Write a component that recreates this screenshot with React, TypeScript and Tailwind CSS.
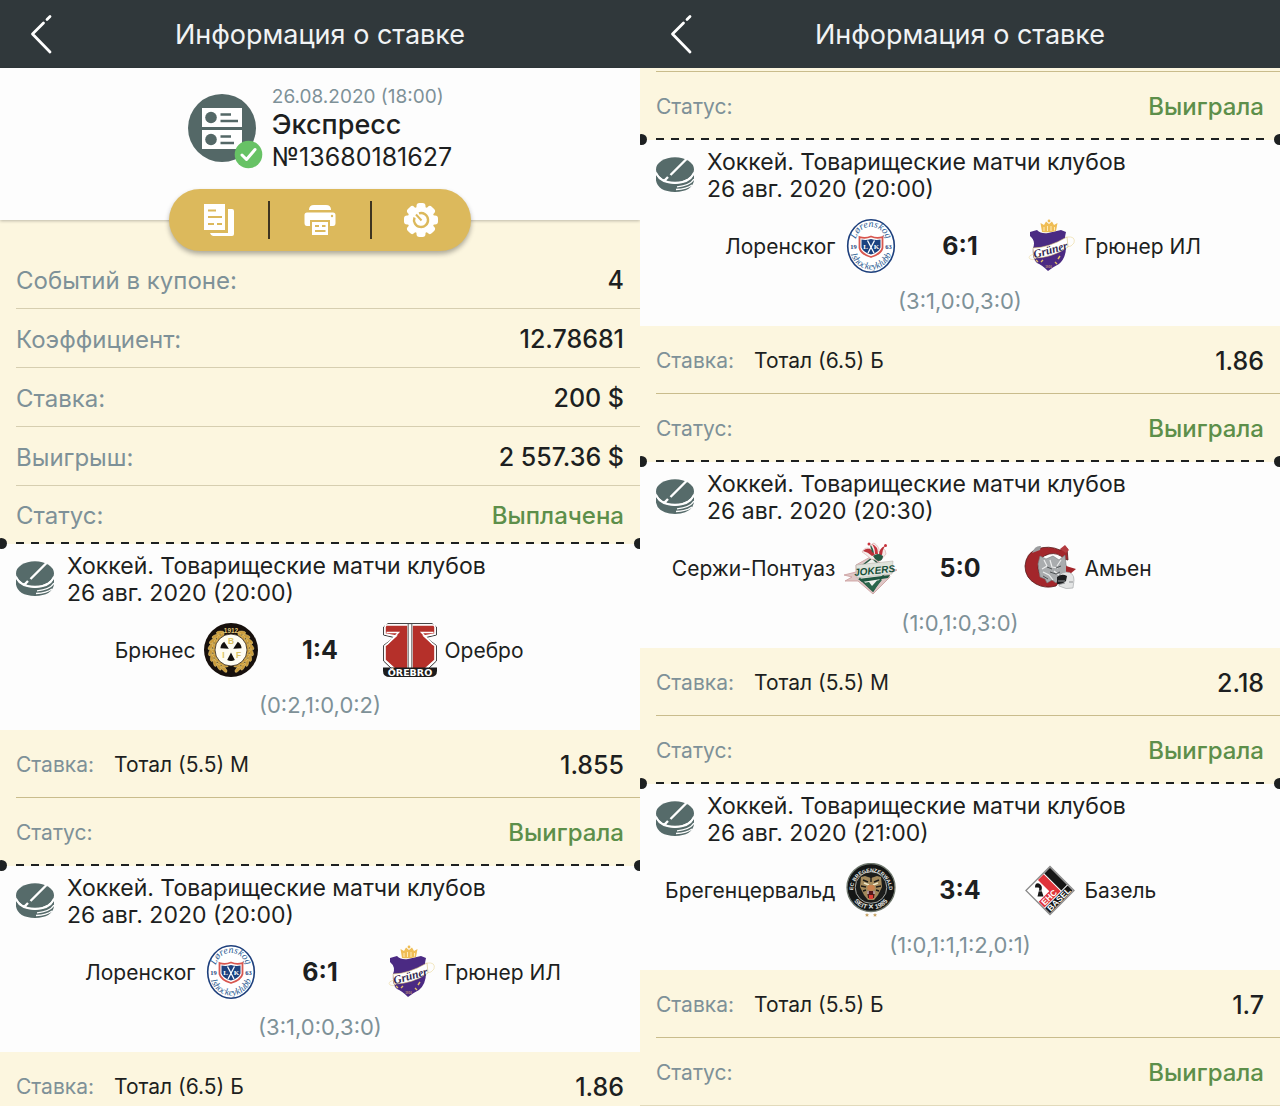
import type { ReactNode } from "react";

type Match = {
  title: string;
  date: string;
  home: string;
  away: string;
  homeLogo: ReactNode;
  awayLogo: ReactNode;
  score: string;
  periods: string;
  bet: string;
  odds: string;
};

const LEAVES = [20, 36, 52, 68, 84, 100, 116, 132, 148];

function BrynasLogo() {
  return (
    <svg viewBox="0 0 54 54" className="size-[54px] shrink-0" aria-hidden="true">
      <circle cx="27" cy="27" r="27" fill="#17100c" />
      {LEAVES.map((a) => (
        <g key={a} fill="#c99a3a" stroke="#f0d98a" strokeWidth="0.4">
          <ellipse cx="27" cy="6.6" rx="1.7" ry="4" transform={`rotate(${a + 12} 27 27) rotate(62 27 6.6)`} />
          <ellipse cx="27" cy="10" rx="1.4" ry="3.4" transform={`rotate(${a + 12} 27 27) rotate(118 27 10)`} />
          <ellipse cx="27" cy="6.6" rx="1.7" ry="4" transform={`rotate(${-a - 12} 27 27) rotate(-62 27 6.6)`} />
          <ellipse cx="27" cy="10" rx="1.4" ry="3.4" transform={`rotate(${-a - 12} 27 27) rotate(-118 27 10)`} />
        </g>
      ))}
      <circle cx="27" cy="27" r="16" fill="#fffdf2" stroke="#2a1d10" strokeWidth="0.8" />
      {[60, 180, 300].map((a) => (
        <path key={a} d="M27 24.5 L23.2 17 Q27 15 30.8 17Z" fill="#15110e" transform={`rotate(${a} 27 27)`} />
      ))}
      <g fill="#dcc564" fontFamily="Liberation Sans, sans-serif" fontWeight="700" fontSize="8.5" textAnchor="middle">
        <text x="27" y="21">B</text>
        <text x="19.5" y="34.5">I</text>
        <text x="34.5" y="34.5">F</text>
      </g>
      <text x="27" y="9.5" fill="#e3c878" fontFamily="Liberation Sans, sans-serif" fontWeight="700" fontSize="6.5" textAnchor="middle">1912</text>
    </svg>
  );
}

function OrebroLogo() {
  const half = "M3 2 H25 V46 H12 L2 37 V23 L13 13 L2 11 V4Z";
  return (
    <svg viewBox="0 0 54 54" className="size-[54px] shrink-0" aria-hidden="true">
      <path d="M5 .6 H49 L53.4 4 V12 L43 14.5 L53.4 22.5 V38 L44 47 H10 L.6 38 V22.5 L11 14.5 L.6 12 V4Z" fill="#fff" stroke="#333" strokeWidth="1" />
      <path d={half} fill="#b5302a" stroke="#fff" strokeWidth="1.6" />
      <path d={half} fill="#b5302a" stroke="#fff" strokeWidth="1.6" transform="translate(54 0) scale(-1 1)" />
      <path d="M25.2 1V46M28.8 1V46" stroke="#333" strokeWidth="0.8" />
      <path d="M3.5 9.5 H15.5 L4 21.5M50.5 9.5 H38.5 L50 21.5" fill="none" stroke="#fff" strokeWidth="1.4" />
      <path d="M0 44.5 H54 V48 Q54 54 47 54 H7 Q0 54 0 48Z" fill="#1c1c1c" />
      <text x="27" y="52.6" fill="#fff" fontFamily="DejaVu Sans, sans-serif" fontWeight="700" fontSize="9.5" textAnchor="middle">ÖREBRO</text>
    </svg>
  );
}

function LorenskogLogo() {
  return (
    <svg viewBox="0 0 54 54" className="size-[54px] shrink-0" aria-hidden="true">
      <defs>
        <path id="lorTop" d="M11 25 A16 17 0 0 1 43 25" />
        <path id="lorBottom" d="M6 29 A21 21.500 0 0 0 48 29" />
      </defs>
      <ellipse cx="27" cy="27" rx="23.3" ry="26.2" fill="#fff" stroke="#1d3f7c" strokeWidth="1.6" />
      <g fill="#2b5c92" fontFamily="Liberation Serif, serif" fontStyle="italic" textAnchor="middle">
        <text fontSize="10"><textPath href="#lorTop" startOffset="50%">Lørenskog</textPath></text>
        <text fontSize="9.5"><textPath href="#lorBottom" startOffset="50%">Ishockeyklubb</textPath></text>
      </g>
      <path d="M15.500 18 Q21 20 27 17.500 Q33 20 38.500 18 V29 Q37 35 27 38 Q17 35 15.500 29Z" fill="#fff" stroke="#d8574f" strokeWidth="1.8" />
      <path d="M17.500 20.500 Q22 21.500 27 20 Q32 21.500 36.500 20.500 V28.500 Q35 33 27 35.500 Q19 33 17.500 28.500Z" fill="#1c4280" />
      <path d="M23.500 21.500 L30 34M30.500 21.500 L24 34" stroke="#fff" strokeWidth="1.3" />
      <g fontFamily="Liberation Serif, serif" fontWeight="700" textAnchor="middle">
        <text x="21.500" y="30" fontSize="7" fill="#fff">L</text>
        <text x="32.500" y="30" fontSize="7" fill="#fff">K</text>
        <text x="9.600" y="29.500" fontSize="6.500" fill="#1d3f7c">19</text>
        <text x="44.400" y="29.500" fontSize="6.500" fill="#1d3f7c">63</text>
      </g>
    </svg>
  );
}

function GrunerLogo() {
  return (
    <svg viewBox="0 0 54 54" className="size-[54px] shrink-0" aria-hidden="true">
      <path d="M7 13 L14 11 Q18 15 25 14 L38 11 L43 13 Q41 20 43 28 Q43 39 36 45 Q30 48 25 52 Q19 46 14 44 Q9 40 10 29 Q13 22 7 17Z" fill="#4b2a83" />
      <path d="M19 13 L17.500 4 L21 6 L23 2.500 L26 5 L29 2.500 L31 6 L34.500 4 L33 12 Q26 14 19 13Z" fill="#efbd55" />
      <circle cx="26" cy="2" r="1.400" fill="#efbd55" />
      <path d="M21 8V12M24.500 7V12M28 7V12M31.500 8V11.500" stroke="#fff0c4" strokeWidth="0.9" />
      <path d="M44 18 Q53 17 51 24 Q49 28 43 28M11 35 Q4 37 7 40 Q10 42 13 39" fill="none" stroke="#f0e4bc" strokeWidth="0.9" />
      <path d="M10 29 Q25 29 44 18 L45 28 Q29 39 11 39Z" fill="#fff" stroke="#d9c07a" strokeWidth="0.6" />
      <text x="27.500" y="34.500" fill="#30264e" fontFamily="Liberation Serif, serif" fontStyle="italic" fontWeight="700" fontSize="11.500" textAnchor="middle" transform="rotate(-16 28 31)">Grüner</text>
      <path d="M18 43 L20 41M32 43 L34 45M13 41 L15 43M37 37 L35 40" stroke="#e5c36a" strokeWidth="1.400" />
      <text x="25.500" y="49" fill="#e5c36a" fontFamily="Liberation Sans, sans-serif" fontSize="3" textAnchor="middle">1916</text>
    </svg>
  );
}

function JokersLogo() {
  return (
    <svg viewBox="0 0 54 54" className="size-[54px] shrink-0" aria-hidden="true">
      <path d="M28 15 L42 27 L53 29 L45 33 L46 36 L29 53 L14 40 L1 40 L8 36 L0 34 L12 31 L12 24 Z" fill="#dfc7c6" stroke="#c99a9a" strokeWidth="0.8" />
      <path d="M28 17 L42 30 L29 50 L16 38 L14 28Z" fill="#f2f2ee" stroke="#265a43" strokeWidth="1.500" />
      <path d="M27 18 Q20 12 18 11 Q21 5 27 8 Q26 3 30 2 Q36 6 35 11 Q41 4 42 13 L36 20Z" fill="#f4ecea" stroke="#d9a3a3" strokeWidth="0.6" />
      <path d="M19 10 Q23 6 28 9 L31 14 L28 15 Q24 11 19 10Z" fill="#b9323a" />
      <path d="M28 3 Q34 5 34 13 L31 13 Q31 7 28 3Z" fill="#c8323c" />
      <path d="M26 4 Q29 6 30 12 L28 11Z" fill="#2a6148" />
      <path d="M41 5 Q35 7 35 14 L38 14 Q38 9 41 5Z" fill="#b9323a" />
      <path d="M29 15 Q34 11 39 15 Q39 20 34 20 Q31 19 29 15Z" fill="#265a43" />
      <circle cx="25" cy="3" r="1.500" fill="#c8323c" />
      <circle cx="41.500" cy="4.500" r="1.500" fill="#c8323c" />
      <path d="M12 24 L49 20 L48 33 L13 37Z" fill="#dfe3dc" stroke="#b4aaa4" strokeWidth="0.5" />
      <text x="30.500" y="33" fill="#174f39" fontFamily="Liberation Sans, sans-serif" fontStyle="italic" fontWeight="700" fontSize="10" textAnchor="middle" transform="rotate(-6 30 29)">JOKERS</text>
      <path d="M14 38 L46 34 L44 37 L18 41Z" fill="#205741" />
      <path d="M20 42 L29 50 L38 39 L33 39.500 L28 45 L25 41Z" fill="#2b664c" />
    </svg>
  );
}

function AmiensLogo() {
  return (
    <svg viewBox="0 0 54 54" className="size-[54px] shrink-0" aria-hidden="true">
      <path d="M44 7 L45 19 L41 18 Q35 11 26 13 Q15 16 15 27 Q16 37 26 39 L38 38 L33 45 Q22 48 13 43 Q2 37 2 25 Q3 12 14 8 Q26 4 37 9Z" fill="#a3262b" stroke="#57191b" strokeWidth="0.8" />
      <path d="M9 12 Q12 4 18 5 L17 9Z" fill="#9b9c9e" />
      <path d="M37 8 L42 4 L46 9 L43 12Z" fill="#b33b3f" />
      <path d="M15 23 L17 15 L23 18 L30 15 L36 19 L42 14 L43 24 L46 29 L41 36 L36 38 L33 42 L29 39 L24 42 L22 38 L17 36 Z" fill="#a9acae" stroke="#75787b" strokeWidth="0.6" />
      <path d="M21 19 L24 25 L19 28M27 19 L29 26 L35 27M38 19 L34 25M20 31 L26 34 L30 39M31 30 L36 34" fill="none" stroke="#eceded" strokeWidth="1.200" />
      <path d="M24 26 L29 28 M33 27 L38 25M27 31 L33 33 L37 31M20 35 L25 38" fill="none" stroke="#45484b" strokeWidth="0.900" />
      <path d="M43 25 L53 28 L47 33 L43 31Z" fill="#a3262b" />
      <path d="M35 40 Q35 32 43 31 Q51 31 51 39 L50 47 Q43 49 36 45Z" fill="#e3e4e4" stroke="#9ea1a3" strokeWidth="0.6" />
      <path d="M34 36 Q39 32 44 35 L43 40 L39 43 L34 43Z" fill="#1d1e20" />
      <path d="M35 40 H42 M36 43.500 L42 42M46 41 H50" stroke="#8e9193" strokeWidth="1" />
    </svg>
  );
}

function BregenzerwaldLogo() {
  return (
    <svg viewBox="0 0 54 54" className="size-[54px] shrink-0" aria-hidden="true">
      <defs>
        <path id="bregTop" d="M9 27 A18 18 0 0 1 45 27" />
        <path id="bregBottom" d="M5.500 25 A21.500 21.500 0 0 0 48.500 25" />
      </defs>
      <circle cx="27" cy="24.500" r="24" fill="#141615" stroke="#70796f" strokeWidth="1.300" />
      <circle cx="27" cy="24.500" r="15.800" fill="#1c1d1b" stroke="#c9ccc6" strokeWidth="0.8" />
      <g fill="#e8e9e5" fontFamily="Liberation Sans, sans-serif" fontWeight="700" textAnchor="middle">
        <text fontSize="5.200"><textPath href="#bregTop" startOffset="50%">EC BREGENZERWALD</textPath></text>
        <text fontSize="6.500"><textPath href="#bregBottom" startOffset="50%">SEIT ✕ 1985</textPath></text>
      </g>
      <path d="M17 14 L21 13 L27 15 L33 13 L37 14 L38 24 L34 32 L30 37 H24 L20 32 L16 24Z" fill="#a48a5c" />
      <path d="M19 17 L24 19M35 17 L30 19M17 23 L22 24M37 23 L32 24M19 28 L22 27M35 28 L32 27M27 14V19" stroke="#1c1b18" strokeWidth="1.400" />
      <path d="M20 20 L25 22M34 20 L29 22" stroke="#ece6c8" strokeWidth="1.400" />
      <path d="M24 22 H30 L31 26 L27 28 L23 26Z" fill="#c9824e" />
      <path d="M23 28 H31 L30 35 H24Z" fill="#53191a" />
      <path d="M25 32 H29 V36 H25Z" fill="#de3f35" />
      <path d="M24 28 V31M30 28 V31" stroke="#fff" strokeWidth="1" />
      <path d="M23 50 l.6 1.300 1.400.1-1 1 .3 1.400-1.300-.7-1.300.7.3-1.400-1-1 1.400-.1zM31 50 l.6 1.300 1.400.1-1 1 .3 1.400-1.300-.7-1.300.7.3-1.400-1-1 1.400-.1z" fill="#c7a263" />
    </svg>
  );
}

function BaselLogo() {
  return (
    <svg viewBox="0 0 54 54" className="size-[54px] shrink-0" aria-hidden="true">
      <g transform="rotate(-45 27 27.500)">
        <rect x="10" y="10.500" width="34" height="34" fill="#fff" stroke="#8b8b8b" strokeWidth="1.300" />
        <path d="M26 11.500 H34 V35.500 H11 V27.500 H26Z" fill="#e0343b" />
        <rect x="35" y="11.500" width="8" height="24" fill="#161616" />
        <rect x="11" y="36.500" width="32" height="7" fill="#161616" />
        <g fill="#fff" fontFamily="Liberation Sans, sans-serif" fontWeight="700" textAnchor="middle">
          <text x="21.500" y="34.700" fontSize="8.500">EHC</text>
          <text x="27" y="43" fontSize="8.500">BASEL</text>
        </g>
      </g>
      <path d="M12 24.500 Q12 19.500 16 20.500 Q20 22.500 18.500 27 L20.500 33.500 H14.500 L16 27 Q17 24 14.500 24.500Z" fill="#161616" />
      <path d="M15 28 H19" stroke="#fff" strokeWidth="0.6" />
    </svg>
  );
}

function PuckIcon() {
  return (
    <svg viewBox="0 0 38 36" className="mt-[17px] h-[36px] w-[38px] shrink-0" aria-hidden="true">
      <ellipse cx="19" cy="12.500" rx="19" ry="12.300" fill="#566b6a" />
      <path d="M0 18 Q4 26.500 19 27 Q34 26.500 38 18 V23.500 Q36 34.500 19 35 Q2 34.500 0 23.500Z" fill="#566b6a" />
      <path d="M0 15.500 Q4 25.500 19 26 Q34 25.500 38 15.500" fill="none" stroke="#fff" strokeWidth="1.800" />
      <path d="M31.500 1 L14.500 18M12 20 L8 24" stroke="#fff" strokeWidth="2.400" />
      <path d="M38 22 Q34 28.500 21 29.800M36 28 Q31 32 20 32.500" fill="none" stroke="#fff" strokeWidth="1.300" />
    </svg>
  );
}

function CouponIcon() {
  return (
    <svg viewBox="0 0 76 76" className="mt-[4px] size-[76px] shrink-0" aria-hidden="true">
      <circle cx="34" cy="34" r="34" fill="#546867" />
      <path d="M14 14H54V33H14ZM14 36H54V55H14Z" fill="#fff" />
      <circle cx="23" cy="23.500" r="5.800" fill="#546867" />
      <circle cx="23" cy="45.500" r="5.800" fill="#546867" />
      <path d="M32.500 20.500H43M32.500 27H50M32.500 42.500H43M32.500 49H46" stroke="#546867" strokeWidth="2.600" />
      <circle cx="60.500" cy="60.500" r="13.800" fill="#67c265" />
      <path d="M54 61 L58.500 65.500 L67 55.500" fill="none" stroke="#fff" strokeWidth="3" strokeLinecap="round" strokeLinejoin="round" />
    </svg>
  );
}

function CopyIcon() {
  return (
    <svg viewBox="0 0 30 32" className="h-[32px] w-[30px]" aria-hidden="true">
      <path d="M0 0H21V26H0Z" fill="#fff" />
      <path d="M24 5H28Q30 5 30 7V30Q30 32 28 32H9Q7 32 6 29H24Z" fill="#fff" />
      <path d="M4 6.500H12M4 13H18M4 20H10M13 20H18" stroke="#dcb95c" strokeWidth="2.200" />
    </svg>
  );
}

function PrintIcon() {
  return (
    <svg viewBox="0 0 32 30" className="h-[30px] w-[32px]" aria-hidden="true">
      <path d="M5 5Q5 0 10 0H22Q27 0 27 5Z" fill="#fff" />
      <path d="M3 7.500H29Q31.500 7.500 31.500 10V18Q31.500 21 29 21H26V15H6V21H3Q.5 21 .5 18V10Q.5 7.500 3 7.500Z" fill="#fff" />
      <path d="M8 17H24V30H8Z" fill="#fff" />
      <path d="M11 21H15M18 21H21.500M11 26H21.500" stroke="#dcb95c" strokeWidth="2" />
      <circle cx="28" cy="11" r="1.200" fill="#dcb95c" />
    </svg>
  );
}

function GearIcon() {
  return (
    <svg viewBox="0 0 36 36" className="size-[36px]" aria-hidden="true">
      <circle cx="18" cy="18" r="13.500" fill="#fff" />
      {[0, 45, 90, 135, 180, 225, 270, 315].map((a) => (
        <rect key={a} x="13.500" y="1" width="9" height="9" rx="3" fill="#fff" transform={`rotate(${a} 18 18)`} />
      ))}
      <path d="M16 11.300 A7 7 0 1 1 11.500 15.500" fill="none" stroke="#dcb95c" strokeWidth="2.400" />
      <path d="M13 12.500 L18.500 18.500" stroke="#dcb95c" strokeWidth="2" />
    </svg>
  );
}

const lorenskog: Match = {
  title: "Хоккей. Товарищеские матчи клубов",
  date: "26 авг. 2020 (20:00)",
  home: "Лоренског",
  away: "Грюнер ИЛ",
  homeLogo: <LorenskogLogo />,
  awayLogo: <GrunerLogo />,
  score: "6:1",
  periods: "(3:1,0:0,3:0)",
  bet: "Тотал (6.5) Б",
  odds: "1.86",
};

const brynas: Match = {
  title: "Хоккей. Товарищеские матчи клубов",
  date: "26 авг. 2020 (20:00)",
  home: "Брюнес",
  away: "Оребро",
  homeLogo: <BrynasLogo />,
  awayLogo: <OrebroLogo />,
  score: "1:4",
  periods: "(0:2,1:0,0:2)",
  bet: "Тотал (5.5) М",
  odds: "1.855",
};

const cergy: Match = {
  title: "Хоккей. Товарищеские матчи клубов",
  date: "26 авг. 2020 (20:30)",
  home: "Сержи-Понтуаз",
  away: "Амьен",
  homeLogo: <JokersLogo />,
  awayLogo: <AmiensLogo />,
  score: "5:0",
  periods: "(1:0,1:0,3:0)",
  bet: "Тотал (5.5) М",
  odds: "2.18",
};

const bregenz: Match = {
  title: "Хоккей. Товарищеские матчи клубов",
  date: "26 авг. 2020 (21:00)",
  home: "Брегенцервальд",
  away: "Базель",
  homeLogo: <BregenzerwaldLogo />,
  awayLogo: <BaselLogo />,
  score: "3:4",
  periods: "(1:0,1:1,1:2,0:1)",
  bet: "Тотал (5.5) Б",
  odds: "1.7",
};

const summary = [
  { label: "Событий в купоне:", value: "4" },
  { label: "Коэффициент:", value: "12.78681" },
  { label: "Ставка:", value: "200 $" },
  { label: "Выигрыш:", value: "2 557.36 $" },
];

function Header() {
  return (
    <header className="relative flex h-[68px] items-center justify-center bg-[#30383b] pt-[2px]">
      <button type="button" aria-label="Назад" className="absolute left-[28px] top-[14px]">
        <svg viewBox="0 0 26 40" className="h-[40px] w-[26px]" aria-hidden="true">
          <path d="M15.500 9 L4.500 20 L22 38M19 5.500 L22 2.500" fill="none" stroke="#fff" strokeWidth="2.800" strokeLinecap="round" strokeLinejoin="round" />
        </svg>
      </button>
      <h1 className="text-[27px] text-[#f1f3f4]">Информация о ставке</h1>
    </header>
  );
}

// Dashed tear line with a punched dot on each side
function TearLine() {
  return (
    <div className="relative z-10 -mt-[2px] h-[2px] px-[16px]">
      <div className="h-full bg-[repeating-linear-gradient(90deg,#1d2021_0_8px,transparent_8px_15px)]" />
      <span className="absolute -left-[4px] -top-[4px] size-[11px] rounded-full bg-[#1d2021]" />
      <span className="absolute -right-[5px] -top-[4px] size-[11px] rounded-full bg-[#1d2021]" />
    </div>
  );
}

function StatusRow() {
  return (
    <div className="flex h-[68px] items-center justify-between px-[16px] pt-[2px]">
      <span className="text-[21px] text-[#7e9198]">Статус:</span>
      <span className="text-[24px] font-medium text-[#5d8f4a]">Выиграла</span>
    </div>
  );
}

function Event({ match }: { match: Match }) {
  return (
    <section>
      <div className="h-[186px] bg-[#fdfdfd]">
        <div className="flex gap-[13px] px-[16px]">
          <PuckIcon />
          <h2 className="pt-[9px] text-[23px] leading-[27px]">
            {match.title}
            <br />
            {match.date}
          </h2>
        </div>
        <div className="mt-[16px] flex h-[54px] items-center text-[21px]">
          <div className="flex flex-1 items-center justify-end gap-[8px]">
            <span className="pt-[2px]">{match.home}</span>
            {match.homeLogo}
          </div>
          <div className="w-[125px] pt-[2px] text-center text-[25px] font-bold">{match.score}</div>
          <div className="flex flex-1 items-center gap-[8px]">
            {match.awayLogo}
            <span className="pt-[2px]">{match.away}</span>
          </div>
        </div>
        <p className="mt-[14px] text-center text-[22px] leading-[28px] text-[#7e9198]">{match.periods}</p>
      </div>
      <div className="ml-[16px] flex h-[68px] items-center border-b border-[#c9bc8c] pr-[16px] pt-[2px]">
        <span className="w-[98px] text-[21px] text-[#7e9198]">Ставка:</span>
        <span className="flex-1 text-[21px]">{match.bet}</span>
        <span className="text-[25px] font-medium leading-[30px]">{match.odds}</span>
      </div>
    </section>
  );
}

export default function App() {
  return (
    <div className="grid h-screen grid-cols-2 overflow-hidden bg-[#fcf6df] font-['Inter',sans-serif] text-[#1d1f21]">
      <main className="min-w-0 overflow-hidden">
        <Header />
        <div className="relative flex h-[152px] justify-center bg-[#fdfdfd] pt-[22px] shadow-[0_1px_3px_#00000040]">
          <CouponIcon />
          <div className="ml-[8px] -mt-[5px]">
            <p className="text-[19px] leading-[24px] text-[#7e9198]">26.08.2020 (18:00)</p>
            <p className="text-[27px] font-medium leading-[32px]">Экспресс</p>
            <p className="text-[25px] leading-[32px]">№13680181627</p>
          </div>
          <div className="absolute bottom-0 left-1/2 flex h-[62px] w-[302px] -translate-x-1/2 translate-y-1/2 items-center divide-x-2 divide-[#3e3420] rounded-full bg-[#dcb95c] shadow-[0_3px_5px_#00000050]">
            <button type="button" aria-label="Копировать" className="flex h-[38px] flex-1 items-center justify-center">
              <CopyIcon />
            </button>
            <button type="button" aria-label="Печать" className="flex h-[38px] flex-1 items-center justify-center">
              <PrintIcon />
            </button>
            <button type="button" aria-label="Настройки" className="flex h-[38px] flex-1 items-center justify-center">
              <GearIcon />
            </button>
          </div>
        </div>
        <div className="pt-[30px]">
          {summary.map((row) => (
            <div key={row.label} className="ml-[16px] flex h-[59px] items-center justify-between border-b border-[#d6ceb0] pr-[16px] pt-[3px]">
              <span className="text-[24px] text-[#7e9198]">{row.label}</span>
              <span className="text-[25px] font-medium">{row.value}</span>
            </div>
          ))}
          <div className="flex h-[58px] items-center justify-between px-[16px] pt-[2px] text-[24px]">
            <span className="text-[#7e9198]">Статус:</span>
            <span className="font-medium text-[#5d8f4a]">Выплачена</span>
          </div>
          <TearLine />
        </div>
        <Event match={brynas} />
        <StatusRow />
        <TearLine />
        <Event match={lorenskog} />
      </main>
      <main className="min-w-0 overflow-hidden">
        <Header />
        <div className="ml-[16px] h-[4px] border-b border-[#c9bc8c]" />
        <StatusRow />
        <TearLine />
        <Event match={lorenskog} />
        <StatusRow />
        <TearLine />
        <Event match={cergy} />
        <StatusRow />
        <TearLine />
        <Event match={bregenz} />
        <div className="h-[68px] border-b border-[#e2dabb]">
          <StatusRow />
        </div>
      </main>
    </div>
  );
}
